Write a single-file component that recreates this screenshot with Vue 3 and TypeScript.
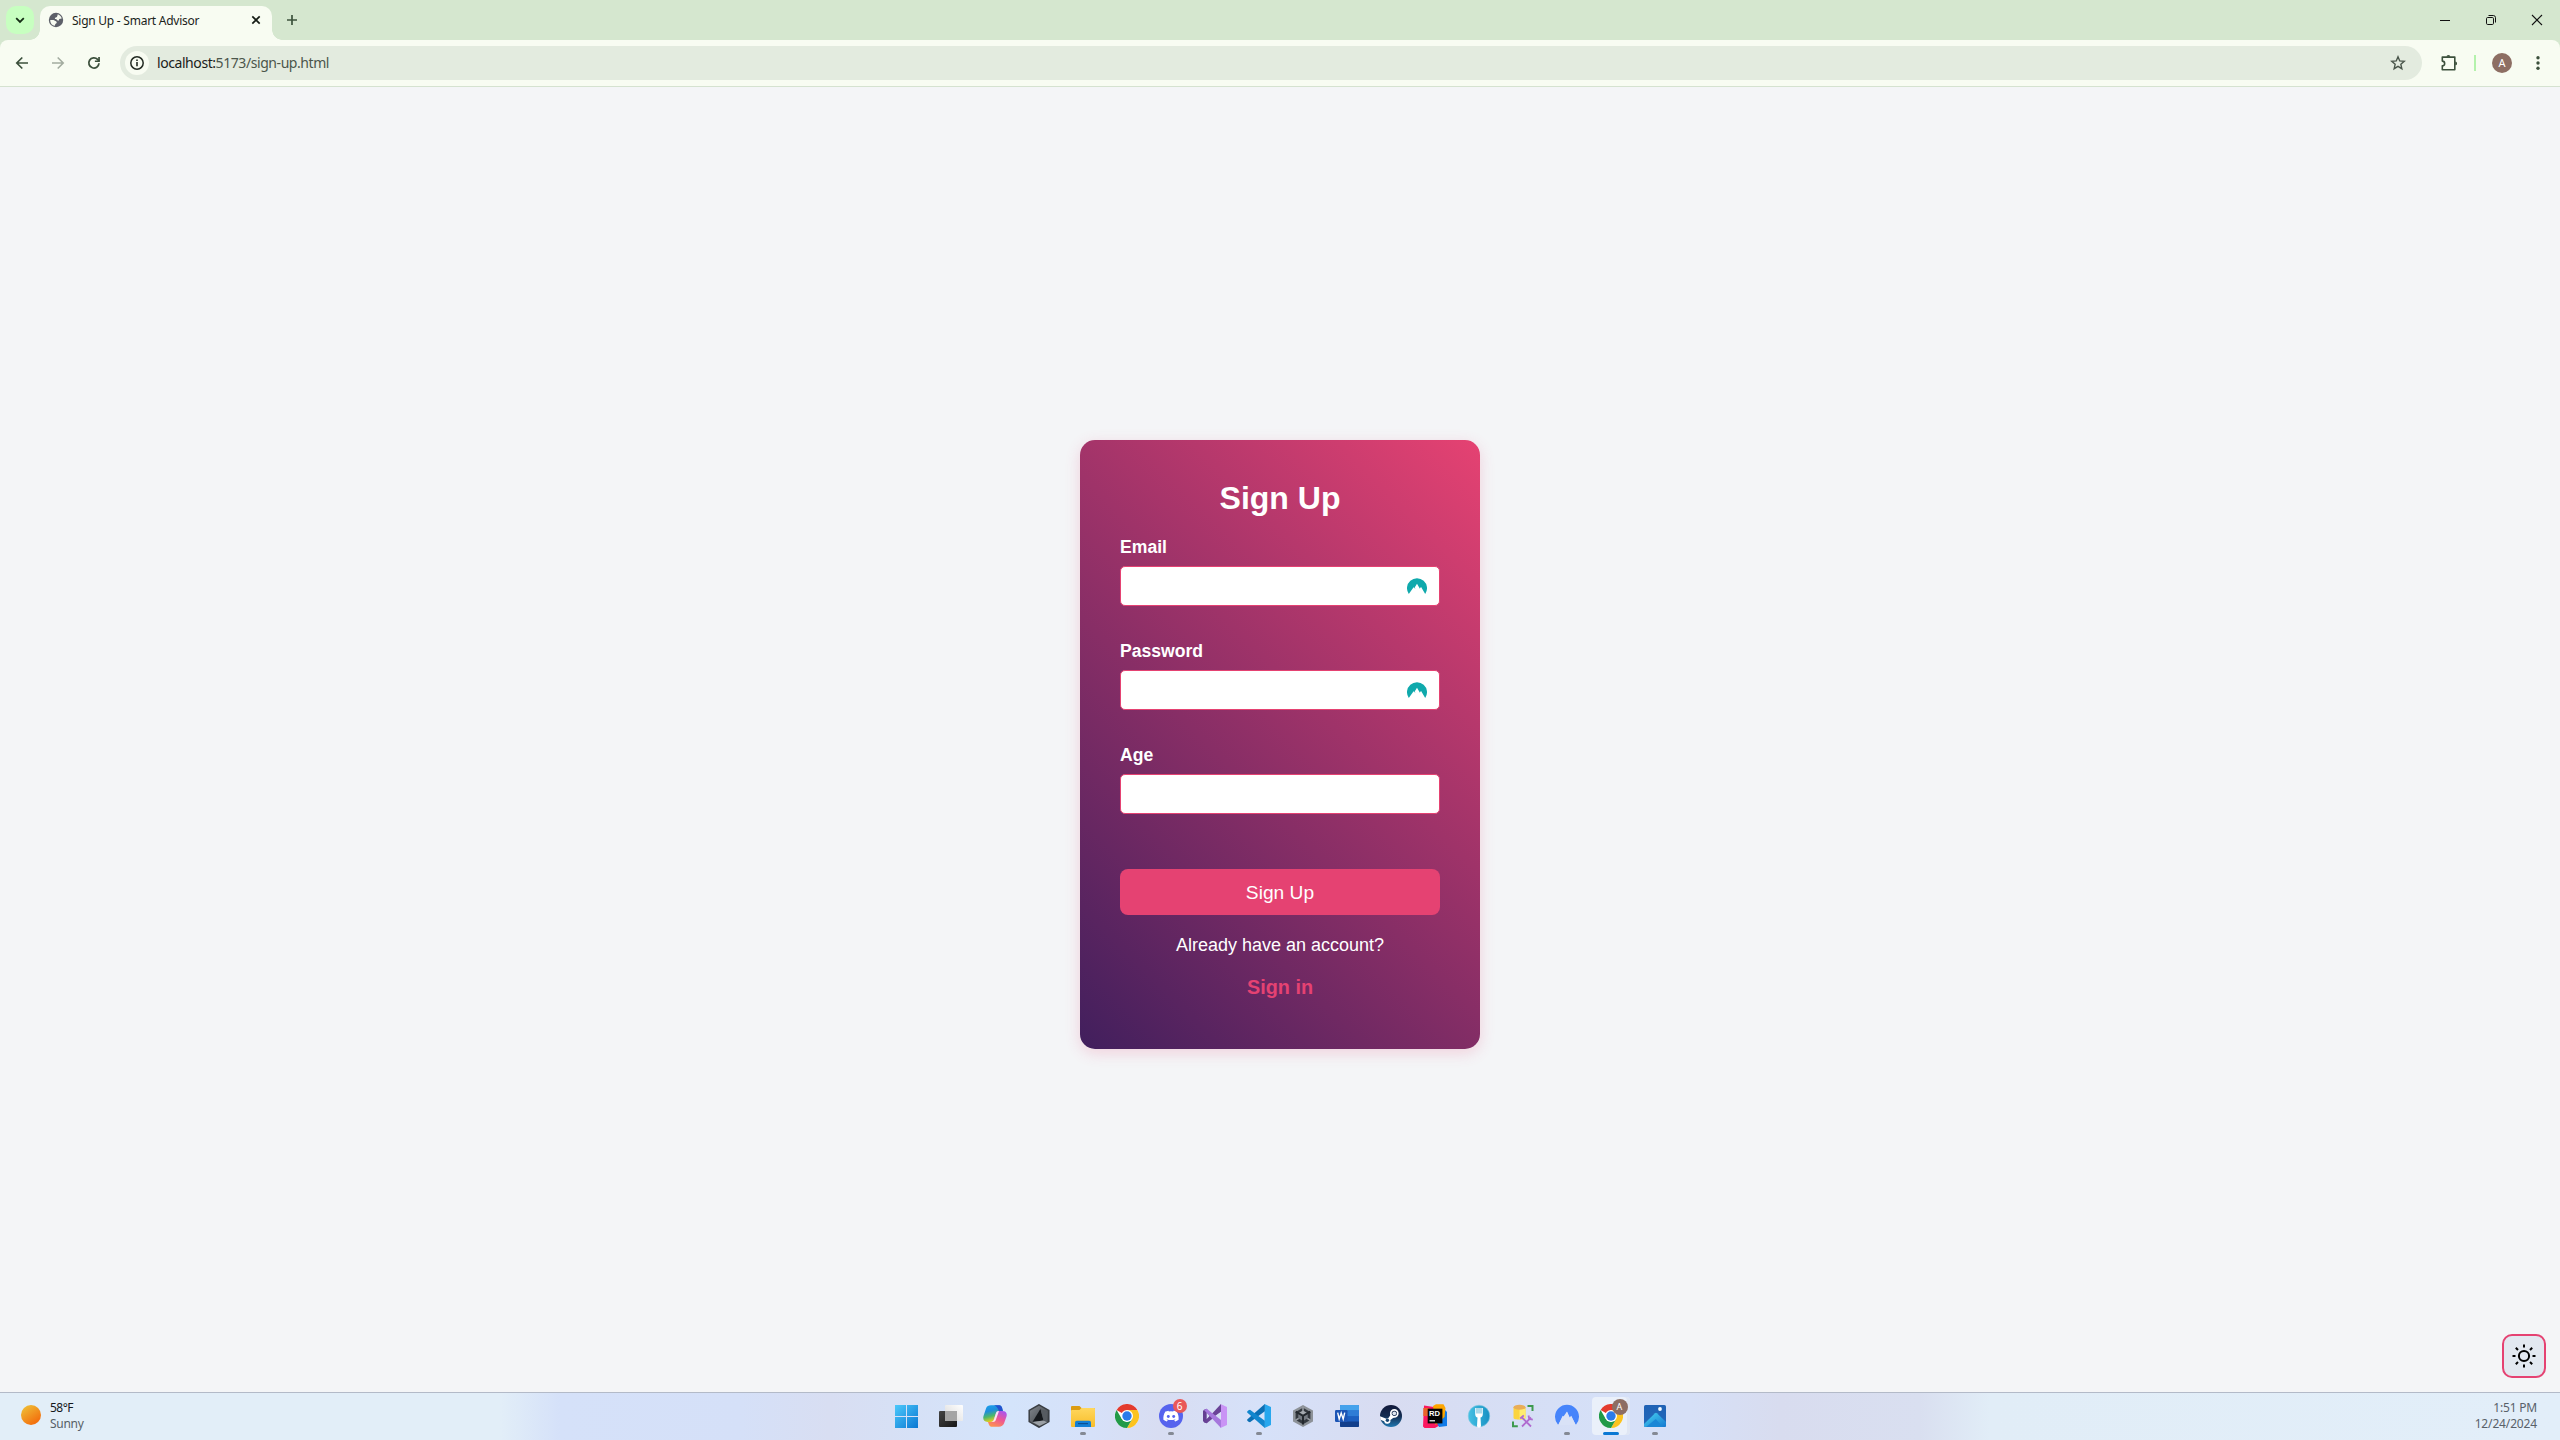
<script setup lang="ts">
interface Field {
  id: string
  label: string
  type: string
  vault: boolean
}

interface TaskApp {
  name: string
  art: string
  state?: 'running' | 'active'
  badge?: { text: string; kind: 'alert' | 'profile' }
}

const fields: Field[] = [
  { id: 'email', label: 'Email', type: 'email', vault: true },
  { id: 'password', label: 'Password', type: 'password', vault: true },
  { id: 'age', label: 'Age', type: 'text', vault: false },
]

const chromeArt = `
  <circle cx="12" cy="12" r="12" fill="#fff"/>
  <path d="M12 12L1.6 6A12 12 0 0 1 22.4 6z" fill="#e33b2e"/>
  <path d="M12 6h10.4A12 12 0 0 1 12 24l5.2-9z" fill="#fcc31e"/>
  <path d="M1.6 6A12 12 0 0 0 12 24l5.2-9-5.2 3-5.2-3z" fill="#229a48"/>
  <circle cx="12" cy="12" r="6" fill="#fff"/>
  <circle cx="12" cy="12" r="4.7" fill="#2a7bea"/>`

const apps: TaskApp[] = [
  {
    name: 'start',
    art: `<defs><linearGradient id="win" x1="0" y1="0" x2="1" y2="1" gradientUnits="objectBoundingBox"><stop offset="0" stop-color="#4cc9fb"/><stop offset="1" stop-color="#0a77d3"/></linearGradient></defs>
      <path d="M0 1h11v11H0zM12 1h11v11H12zM0 13h11v11H0zM12 13h11v11H12z" fill="url(#win)"/>`,
  },
  {
    name: 'task-view',
    art: `<defs><linearGradient id="tvd" x1="0" y1="0" x2="1" y2="1"><stop offset="0" stop-color="#444"/><stop offset="1" stop-color="#171717"/></linearGradient>
      <linearGradient id="tvl" x1="0" y1="1" x2="1" y2="0"><stop offset="0" stop-color="#d8d8d8"/><stop offset="1" stop-color="#fff"/></linearGradient></defs>
      <rect x="0" y="7" width="18" height="16" rx="1" fill="url(#tvd)"/>
      <rect x="6" y="1" width="18" height="16" rx="1" fill="url(#tvl)"/>
      <path d="M6 7h12v10H6.800a.8.8 0 0 1-.8-.8z" fill="#a4a4a4"/>`,
  },
  {
    name: 'copilot',
    art: `<defs><linearGradient id="cpa" x1="0" y1="0" x2=".3" y2="1"><stop offset="0" stop-color="#1aa2ee"/><stop offset=".4" stop-color="#1f8edb"/><stop offset=".7" stop-color="#4db86a"/><stop offset="1" stop-color="#e8cf1d"/></linearGradient>
      <linearGradient id="cpb" x1=".8" y1="0" x2=".3" y2="1"><stop offset="0" stop-color="#a855f0"/><stop offset=".5" stop-color="#ee5793"/><stop offset="1" stop-color="#fd9150"/></linearGradient></defs>
      <path d="M8 1.300h8.300c1.500 0 2.300 1 2.700 2.300L19.900 7H16c-1.700 0-2.500.8-3 2.300l-2.100 6.300C10.400 17 9.500 18 8 18H4.500C1 18-.4 15.200.5 12L3 4.600C3.700 2.400 5.500 1.300 8 1.300z" fill="url(#cpa)"/>
      <path d="M11 1.300h5.300c1.500 0 2.300 1 2.700 2.300L19.900 7H16c-1.200-3-2.600-5-5-5.700z" fill="#2352cf"/>
      <path d="M16 22.700H8.400c-1.300 0-2.100-.9-2.500-2.100L5 18h3c1.500 0 2.400-1 2.900-2.400L13 9.300C13.500 7.800 14.300 7 16 7h3.500c3.500 0 4.900 2.300 4 5.500L21 19.600c-.8 2.100-2.500 3.100-5 3.100z" fill="url(#cpb)"/>
      <path d="M12.900 9.500C13.500 7.700 14.400 7 16 7l-3.300 9.300C12 18 10.800 18 8 18c1.500 0 2.400-1 2.900-2.400z" fill="#fff" opacity=".85"/>`,
  },
  {
    name: 'hex-cursor',
    art: `<defs><linearGradient id="hxg" x1="0" y1="0" x2="1" y2="1"><stop offset="0" stop-color="#84898f"/><stop offset="1" stop-color="#33373c"/></linearGradient></defs>
      <path d="M12 .8L21.800 6.400v11.200L12 23.200l-9.800-5.600V6.400z" fill="url(#hxg)" stroke="#393d42" stroke-width="1.500"/>
      <path d="M13.500 4.800L16.500 16.500 5.500 18z" fill="#15181c"/><path d="M16.500 16.500l4 1.500-8 4L5.500 18z" fill="#9ba0a5"/>
      <path d="M13.500 4.800L16.500 16.500l4 1.500-.2-10z" fill="#565b61"/>`,
  },
  {
    name: 'files',
    state: 'running',
    art: `<defs><linearGradient id="fld" x1="0" y1="0" x2="0" y2="1"><stop offset="0" stop-color="#ffd75e"/><stop offset="1" stop-color="#f8bd2a"/></linearGradient></defs>
      <path d="M0 3a1 1 0 0 1 1-1h7.500l2 2H23a1 1 0 0 1 1 1v6H0z" fill="#dc9c12"/>
      <path d="M0 7a1 1 0 0 1 1-1h7.500l2-2H23a1 1 0 0 1 1 1v17a1 1 0 0 1-1 1H1a1 1 0 0 1-1-1z" fill="url(#fld)"/>
      <path d="M4 23v-4.500A1.800 1.800 0 0 1 5.800 16.700h12.400a1.800 1.800 0 0 1 1.800 1.800V23z" fill="#137fd5"/>
      <path d="M7 19.600h10" stroke="#0d4f91" stroke-width="1.200"/>`,
  },
  { name: 'chrome', art: chromeArt },
  {
    name: 'discord',
    state: 'running',
    badge: { text: '6', kind: 'alert' },
    art: `<circle cx="12" cy="12" r="12" fill="#5663ee"/>
      <path d="M17.600 7.600a11 11 0 0 0-3-.95l-.5.9a10.500 10.500 0 0 0-4.200 0l-.5-.9c-1 .2-2 .5-3 .95C4.600 10.300 4.200 13 4.400 15.700a11 11 0 0 0 3.500 1.700l.9-1.300-1.300-.6.3-.3c2.700 1.200 5.700 1.200 8.400 0l.3.3-1.300.6.9 1.300a11 11 0 0 0 3.500-1.700c.3-3.100-.4-5.800-2-8.100z" fill="#fff"/>
      <circle cx="9.300" cy="12.500" r="1.450" fill="#5663ee"/><circle cx="14.700" cy="12.500" r="1.450" fill="#5663ee"/>`,
  },
  {
    name: 'visual-studio',
    art: `<path d="M1 18.200l2.700 1L9 12 3.700 4.800 1 5.800 0 7v10z" fill="#643f92"/>
      <path d="M3.700 8.600v6.600L7 12z" fill="#d7dff5"/>
      <path d="M17.500 0L24 3v18l-6.500 3z" fill="#c993f5"/>
      <path d="M1 18.200l2.700 1L18 8V0z" fill="#6a4397"/>
      <path d="M12 12l6-4.300v8.600z" fill="#d7dff5"/>
      <path d="M3.700 4.800L18 16v8L1 5.900z" fill="#a678dd"/>`,
  },
  {
    name: 'vscode',
    state: 'running',
    art: `<path d="M17.500 0L24 3v18l-6.500 3z" fill="#27a7ee"/>
      <path d="M17.800 0v7.200L3 18.200 1.500 17.800.2 16.600V15.600z" fill="#0c6fb4"/>
      <path d="M17.800 24v-7.200L3 5.800l-1.500.4L.2 7.400v1z" fill="#1286ce"/>`,
  },
  {
    name: 'unity',
    art: `<path d="M12 1l10 5.600v11L12 23 2 17.600v-11z" fill="#8d9298"/>
      <path d="M12 3.700l7.400 4.200v8.200L12 20.300l-7.400-4.200V7.900z" fill="#33383e"/>
      <path d="M12 12l4.700-2.700v5L12 17zM12 12L7.300 9.300v5L12 17z" fill="#757b82"/>
      <path d="M12 6.500l4.700 2.800L12 12 7.300 9.300z" fill="#a5aaaf"/>
      <path d="M12 11.500V20.500M12.300 11.700l7-4M11.700 11.700l-7-4" stroke="#24292e" stroke-width="2"/>
      <path d="M12 3v4M4.500 16.300l3.200-1.900M19.500 16.300l-3.200-1.900" stroke="#979ca2" stroke-width="1.600"/>`,
  },
  {
    name: 'word',
    art: `<rect x="5" y="1" width="19" height="22" rx="1.300" fill="#1c5fc0"/>
      <path d="M5 2.300A1.300 1.300 0 0 1 6.300 1h16.400A1.300 1.300 0 0 1 24 2.300v4.300H5z" fill="#45a2ec"/>
      <path d="M5 6.600h19v5.500H5z" fill="#2e7cd6"/><path d="M5 17.500h19v4.200a1.300 1.300 0 0 1-1.300 1.300H6.300A1.300 1.300 0 0 1 5 21.700z" fill="#123f8c"/>
      <rect x="0" y="6" width="12.500" height="12" rx="1.200" fill="#1c55b5"/>
      <path d="M2.700 8.700l1.500 6.500 2-6.200 2 6.200 1.500-6.500" fill="none" stroke="#fff" stroke-width="1.400"/>`,
  },
  {
    name: 'steam',
    art: `<defs><linearGradient id="stm" x1="0" y1="0" x2="0" y2="1"><stop offset="0" stop-color="#10183a"/><stop offset=".5" stop-color="#142c50"/><stop offset="1" stop-color="#2077b0"/></linearGradient></defs>
      <circle cx="12" cy="12" r="11" fill="url(#stm)"/>
      <circle cx="15.300" cy="9.300" r="3.500" fill="none" stroke="#fff" stroke-width="1.700"/><circle cx="15.300" cy="9.300" r="1.900" fill="#dfe6ef"/>
      <path d="M1 12.200l6.300 2.500a3 3 0 0 1 2-.5l2.800-4.300 3 3.300-3.700 2.800a3.200 3.200 0 0 1-6.300 1.200l-3.700-1.500z" fill="#fff"/>
      <circle cx="8.400" cy="16.300" r="1.700" fill="#1a4670"/>`,
  },
  {
    name: 'rider',
    art: `<path d="M1 1.500L11 3l11 9-3 8-7 4H1.500L0 22.500z" fill="#fb1860"/>
      <path d="M21 5l3 3v14l-8 1-2-4z" fill="#117be8"/>
      <path d="M10 2l3-1.700h7.500L22.500 4l-1 9-9 8z" fill="#fda500"/>
      <path d="M.3 4h6v8h-6z" fill="#e8632a"/>
      <rect x="4.700" y="4.700" width="14.700" height="14.700" fill="#050505"/>
      <text x="6" y="11.700" font-family="Liberation Sans, sans-serif" font-size="7.600" font-weight="700" fill="#fff">RD</text>
      <path d="M6.500 16.800h5.500" stroke="#fff" stroke-width="1.200"/>`,
  },
  {
    name: 'fork',
    art: `<defs><linearGradient id="frk" x1="0" y1="0" x2="1" y2="0"><stop offset="0" stop-color="#45c1e4"/><stop offset="1" stop-color="#1790c3"/></linearGradient></defs>
      <circle cx="12" cy="12" r="10.800" fill="url(#frk)" stroke="#8ccbe2" stroke-width=".6"/>
      <path d="M8.200 4v6.200c0 2 1 2.900 2.300 3.400L10 21.800a2 2 0 0 0 4 0l-.5-8.200c1.300-.5 2.300-1.400 2.300-3.400V4" fill="#fff"/>
      <path d="M10 3.500v6M12 3.500v6M14 3.500v6" stroke="#41a9ce" stroke-width=".9"/>`,
  },
  {
    name: 'db-tools',
    art: `<path d="M2.500 3.500h12v10.500c0 2-12 2-12 0z" fill="#fbd43f"/><path d="M8.500 5h6v9c0 1-3 1.500-6 1.500z" fill="#ffec70"/>
      <ellipse cx="8.500" cy="3.300" rx="6" ry="2.500" fill="#e9ad57"/>
      <path d="M16.500 2h5v5M2 17.500v4.700h4.800" fill="none" stroke="#3d9a4d" stroke-width="2"/>
      <path d="M10.500 13l9.500 9.500M20 13.500l-9 9" stroke="#b06bd0" stroke-width="1.800"/>
      <path d="M9.200 14.500l3.600-3.200M17.500 11.500l.8 3.500 3.500.6" fill="none" stroke="#b06bd0" stroke-width="1.800"/>`,
  },
  {
    name: 'nordvpn',
    state: 'running',
    art: `<path d="M3.200 21A12 12 0 1 1 20.800 21L16 12.300l-1.500 1.800.3 1L12 8l-2.300 4.600.7 1.300L8 12.300z" fill="#4684fb"/>
      <path d="M12 7.500l-3.500 5-.8-.7-4.500 9.200h17.600l-4.500-9.200-1.500 1.600z" fill="#d9e2f7"/>`,
  },
  {
    name: 'chrome-profile',
    state: 'active',
    badge: { text: 'A', kind: 'profile' },
    art: chromeArt,
  },
  {
    name: 'photos',
    state: 'running',
    art: `<defs><linearGradient id="pha" x1="0" y1="0" x2="0" y2="1"><stop offset="0" stop-color="#1f62b5"/><stop offset="1" stop-color="#2369ba"/></linearGradient>
      <linearGradient id="phb" x1="0" y1="0" x2="1" y2="1"><stop offset="0" stop-color="#48d3f2"/><stop offset="1" stop-color="#1478d0"/></linearGradient></defs>
      <rect x="1" y="1" width="22" height="22" rx="1.600" fill="url(#pha)"/>
      <path d="M1 20L12 9.300a1.500 1.500 0 0 1 2 0l9 8.700v3.400a1.600 1.600 0 0 1-1.600 1.600H2.600A1.600 1.600 0 0 1 1 21.400z" fill="url(#phb)"/>
      <path d="M3 23l9.800-8L20 23z" fill="#1a87d6"/>
      <circle cx="17" cy="5" r="1.900" fill="#f2fbff"/>`,
  },
]
</script>

<template>
  <div class="screen">
    <header class="browser">
      <div class="tabstrip">
        <button class="tab-search" aria-label="Search tabs">
          <svg width="10" height="10" viewBox="0 0 10 10"><path d="M1.200 3.200L5 6.900l3.800-3.700" fill="none" stroke="#142c14" stroke-width="1.800" /></svg>
        </button>
        <div class="tab">
          <svg class="globe" width="16" height="16" viewBox="0 0 16 16">
            <circle cx="8" cy="8" r="7.200" fill="#5d6069" />
            <path d="M9.600 2.300c1.900.5 3.500 1.900 4.100 4-.8.8-1.500.3-2.300.8-.7.500-.2 1.500-1.300 1.600-1.200 0-1.200-1.600-2.500-1.600-.8 0-1-.8-.4-1.300.7-.5 1.900-.2 1.900-1.200 0-.8.900-1.300.5-2.300z" fill="#f7fbf1" />
            <path d="M2.200 7.900h3.300c1 0 1.300.9 2 1.200.8.400 1.300.8 1.200 1.700-.1.800-1.300.9-1.600 1.600-.2.600.1.900-.1 1.400A5.900 5.900 0 0 1 2.200 7.900z" fill="#f7fbf1" />
          </svg>
          <span class="tab-title">Sign Up - Smart Advisor</span>
          <svg class="tab-close" width="10" height="10" viewBox="0 0 10 10"><path d="M1.300 1.300l7.400 7.400M8.700 1.300L1.300 8.700" stroke="#151c15" stroke-width="1.700" /></svg>
        </div>
        <svg class="new-tab" width="12" height="12" viewBox="0 0 12 12"><path d="M6 1v10M1 6h10" stroke="#3c533c" stroke-width="1.700" /></svg>
        <div class="window-controls">
          <svg width="12" height="12" viewBox="0 0 12 12"><path d="M1 6.500h10" stroke="#111" stroke-width="1" /></svg>
          <svg width="12" height="12" viewBox="0 0 12 12"><g fill="none" stroke="#111"><rect x="1.500" y="3.500" width="7" height="7" rx="1.200" /><path d="M3.500 1.500h4.800a2.200 2.200 0 0 1 2.200 2.200v4.800" /></g></svg>
          <svg width="12" height="12" viewBox="0 0 12 12"><path d="M1 1l10 10M11 1L1 11" stroke="#111" stroke-width="1.100" /></svg>
        </div>
      </div>

      <div class="toolbar">
        <svg class="nav" width="16" height="16" viewBox="0 0 16 16"><path d="M14 8H3M8.300 2.500L2.800 8l5.500 5.500" fill="none" stroke="#3c503c" stroke-width="1.700" /></svg>
        <svg class="nav" width="16" height="16" viewBox="0 0 16 16"><path d="M2 8h11M7.700 2.500L13.200 8l-5.500 5.500" fill="none" stroke="#a3aca0" stroke-width="1.600" /></svg>
        <svg class="nav" width="16" height="16" viewBox="0 0 16 16"><path d="M13 8.300A5.100 5.100 0 1 1 11.600 4.400L13.200 6" fill="none" stroke="#3c503c" stroke-width="1.800" /><path d="M13.900 2v5H8.900V5.500h3.300V2z" fill="#3c503c" /></svg>
        <div class="omnibox">
          <span class="site-info">
            <svg width="16" height="16" viewBox="0 0 16 16"><circle cx="8" cy="8" r="6.200" fill="none" stroke="#222a22" stroke-width="1.500" /><path d="M8 7v4.300M8 4.400v1.600" stroke="#222a22" stroke-width="1.600" /></svg>
          </span>
          <span class="url"><b>localhost:</b>5173/sign-up.html</span>
          <svg class="star" width="16" height="16" viewBox="0 0 16 16"><path d="M8 1.800l1.750 4.150 4.500.4-3.400 2.950 1 4.400L8 11.350 4.150 13.700l1-4.400-3.400-2.950 4.500-.4z" fill="none" stroke="#49554a" stroke-width="1.400" /></svg>
        </div>
        <svg class="puzzle" width="18" height="18" viewBox="0 0 18 18"><path d="M2.300 3.100h12.500v12.700H2.300v-4a2.300 2.300 0 0 0 0-4.700z" fill="none" stroke="#3c503c" stroke-width="1.600" stroke-linejoin="round" /><path d="M6.500 2.800a1.900 1.900 0 0 1 3.800 0zM15.200 7.500a1.900 1.900 0 0 1 0 3.800z" fill="#3c503c" /></svg>
        <span class="divider"></span>
        <span class="avatar">A</span>
        <svg class="menu" width="4" height="16" viewBox="0 0 4 16"><g fill="#3c503c"><circle cx="2" cy="2.700" r="1.700" /><circle cx="2" cy="8" r="1.700" /><circle cx="2" cy="13.300" r="1.700" /></g></svg>
      </div>
    </header>

    <main class="page">
      <form class="card" @submit.prevent>
        <h1>Sign Up</h1>
        <div v-for="f in fields" :key="f.id" class="field">
          <label :for="f.id">{{ f.label }}</label>
          <div class="control">
            <input :id="f.id" :type="f.type" />
            <svg v-if="f.vault" class="vault" width="20" height="16" viewBox="0 0 20 16">
              <path d="M1.800 16A10 10 0 1 1 18.200 16L14.100 9l-1.200 1.300.3.900L10 5.700 7.700 9.500l.8 1.500-1.900-1.700z" fill="#0fa9ac" />
            </svg>
          </div>
        </div>
        <button class="submit" type="submit">Sign Up</button>
        <p class="question">Already have an account?</p>
        <a class="signin">Sign in</a>
      </form>

      <button class="theme" aria-label="Toggle theme">
        <svg width="24" height="24" viewBox="0 0 24 24">
          <circle cx="12" cy="12" r="5.100" fill="none" stroke="#000" stroke-width="2" />
          <path d="M12 .5v3M12 20.500v3M.5 12h3M20.500 12h3M3.800 3.800l2.200 2.200M18 18l2.200 2.200M3.800 20.200L6 18M18 6l2.200-2.200" stroke="#000" stroke-width="2" />
        </svg>
      </button>
    </main>

    <footer class="taskbar">
      <div class="weather">
        <span class="sun"></span>
        <div class="lines">
          <span class="temp">58°F</span>
          <span class="sky">Sunny</span>
        </div>
      </div>
      <div class="apps">
        <div v-for="app in apps" :key="app.name" class="app" :class="app.state">
          <svg width="24" height="24" viewBox="0 0 24 24" v-html="app.art"></svg>
          <span v-if="app.badge" class="badge" :class="app.badge.kind">{{ app.badge.text }}</span>
          <span v-if="app.state" class="mark"></span>
        </div>
      </div>
      <div class="clock">
        <span class="time">1:51 PM</span>
        <span class="date">12/24/2024</span>
      </div>
    </footer>
  </div>
</template>

<style>
body {
  margin: 0;
  overflow: hidden;
}
</style>

<style scoped>
.screen {
  display: flex;
  flex-direction: column;
  width: 2560px;
  height: 1440px;
  font-family: "Liberation Sans", Arial, sans-serif;
  background: #f4f5f7;
}
svg {
  display: block;
  flex: none;
}
button {
  padding: 0;
  border: 0;
}

/* browser frame */
.browser {
  background: #d5e7cf;
  font-family: "Noto Sans", "Open Sans", sans-serif;
}
.tabstrip {
  display: flex;
  align-items: center;
  height: 40px;
}
.tab-search {
  display: flex;
  align-items: center;
  justify-content: center;
  width: 28px;
  height: 28px;
  margin: 0 6px;
  border-radius: 10px;
  background: #c7ffc0;
}
.tab {
  position: relative;
  display: flex;
  align-items: center;
  box-sizing: border-box;
  width: 232px;
  height: 34px;
  margin-top: 6px;
  padding: 0 11px 6px 8px;
  border-radius: 10px 10px 0 0;
  background: #f8fcf2;
}
.tab::before,
.tab::after {
  content: "";
  position: absolute;
  bottom: 0;
  width: 10px;
  height: 10px;
}
.tab::before {
  right: 100%;
  background: radial-gradient(circle at 0 0, transparent 9.5px, #f8fcf2 10px);
}
.tab::after {
  left: 100%;
  background: radial-gradient(circle at 100% 0, transparent 9.5px, #f8fcf2 10px);
}
.tab-title {
  flex: 1;
  margin-left: 8px;
  padding-top: 1px;
  font-size: 12px;
  line-height: 16px;
  letter-spacing: -0.25px;
  white-space: nowrap;
  color: #1a231a;
}
.new-tab {
  margin-left: 14px;
}
.window-controls {
  display: flex;
  gap: 34px;
  margin-left: auto;
  padding-right: 17px;
}
.toolbar {
  display: flex;
  align-items: center;
  box-sizing: border-box;
  height: 47px;
  padding: 0 20px 0 14px;
  border-bottom: 1px solid #d5e2d0;
  border-radius: 8px 8px 0 0;
  background: #f8fcf2;
}
.nav {
  margin-right: 20px;
}
.omnibox {
  display: flex;
  flex: 1;
  align-items: center;
  height: 34px;
  margin-left: -2px;
  padding: 0 16px 0 5px;
  border-radius: 17px;
  background: #e3ebdf;
}
.site-info {
  display: flex;
  align-items: center;
  justify-content: center;
  width: 24px;
  height: 24px;
  border-radius: 50%;
  background: #f8fcf2;
}
.url {
  flex: 1;
  margin-left: 8px;
  font-size: 14px;
  line-height: 20px;
  letter-spacing: -0.43px;
  color: #4b564b;
}
.url b {
  font-weight: 400;
  color: #1a211a;
}
.puzzle {
  margin-left: 18px;
}
.divider {
  width: 2px;
  height: 16px;
  margin-left: 16px;
  background: #b4f2ac;
}
.avatar {
  width: 20px;
  height: 20px;
  margin-left: 16px;
  border-radius: 50%;
  background: #8d6e63;
  color: #fff;
  font-size: 11px;
  line-height: 20px;
  text-align: center;
}
.menu {
  margin-left: 24px;
}

/* page */
.page {
  position: relative;
  display: flex;
  flex: 1;
  align-items: center;
  justify-content: center;
}
.card {
  display: flex;
  flex-direction: column;
  box-sizing: border-box;
  width: 400px;
  height: 609px;
  margin-top: 10px;
  padding: 40px;
  border-radius: 15px;
  background: linear-gradient(45deg, #411f5d, #e54272);
  box-shadow: 0 4px 15px rgba(229, 66, 114, 0.2);
  color: #fff;
}
h1 {
  margin: 0 0 14px;
  font-size: 32px;
  line-height: 37px;
  text-align: center;
}
.field {
  height: 104px;
}
.field label {
  display: block;
  height: 21px;
  margin-bottom: 14px;
  font-size: 17.6px;
  font-weight: 700;
  line-height: 33px;
}
.control {
  position: relative;
}
.control input {
  display: block;
  box-sizing: border-box;
  width: 320px;
  height: 40px;
  border: 1px solid #e54272;
  border-radius: 5px;
  outline: 0;
  background: #fff;
}
.vault {
  position: absolute;
  top: 12px;
  right: 13px;
}
.submit {
  height: 46px;
  margin-top: 26px;
  border-radius: 8px;
  background: #e54272;
  color: #fff;
  font: 19.2px/45px "Liberation Sans", Arial, sans-serif;
}
.question {
  margin: 18px 0 0;
  font-size: 18px;
  line-height: 24px;
  text-align: center;
}
.signin {
  margin-top: 18px;
  color: #e54272;
  font-size: 19.8px;
  font-weight: 700;
  line-height: 24px;
  text-align: center;
}
.theme {
  position: absolute;
  right: 14px;
  bottom: 14px;
  display: flex;
  align-items: center;
  justify-content: center;
  box-sizing: border-box;
  width: 44px;
  height: 44px;
  border: 2px solid #e54272;
  border-radius: 10px;
  background: #e2e8f0;
}

/* taskbar */
.taskbar {
  display: flex;
  align-items: center;
  justify-content: space-between;
  box-sizing: border-box;
  height: 48px;
  padding-bottom: 1px;
  border-top: 1px solid #b3bac8;
  background: linear-gradient(90deg, #e2eef8 0, #e2eef8 500px, #d5e1f9 560px, #d5e0f8 740px, #d8def2 830px, #d4e4fb 1010px, #d6e1f9 1090px, #d8ddf2 1160px, #d6e1f9 1260px, #d8dcf1 1390px, #d5e0f8 1610px, #d6e0f7 1690px, #d8dcef 1780px, #d9dff0 1920px, #e1edf7 1990px, #e2eef9 2560px);
  font-family: "Noto Sans", "Open Sans", sans-serif;
  font-size: 12px;
  line-height: 16px;
}
.weather,
.clock {
  display: flex;
  box-sizing: border-box;
  width: 300px;
}
.weather {
  align-items: center;
  padding-left: 21px;
}
.sun {
  width: 20px;
  height: 20px;
  margin: -2px 9px 0 0;
  border-radius: 50%;
  background: linear-gradient(145deg, #efbd35 10%, #f3720f 80%);
}
.lines {
  display: flex;
  flex-direction: column;
}
.temp {
  letter-spacing: -0.5px;
  color: #14181c;
}
.sky {
  letter-spacing: -0.3px;
  color: #565e66;
}
.clock {
  flex-direction: column;
  align-items: flex-end;
  padding-right: 23px;
  color: #596169;
}
.time {
  letter-spacing: -0.2px;
}
.date {
  letter-spacing: -0.15px;
}
.apps {
  display: flex;
  gap: 6px;
  margin-left: 1px;
}
.app {
  position: relative;
  display: flex;
  align-items: center;
  justify-content: center;
  width: 38px;
  height: 38px;
  border-radius: 4px;
}
.app.active {
  background: #eaf0fa;
  box-shadow: inset -3px 0 0 #dfe6f4;
}
.mark {
  position: absolute;
  bottom: 0;
  left: 16px;
  width: 6px;
  height: 3px;
  border-radius: 2px;
  background: #848994;
}
.active .mark {
  left: 11px;
  width: 16px;
  background: #0b78d4;
}
.badge {
  position: absolute;
  top: 2px;
  right: 3px;
  width: 14px;
  height: 14px;
  border-radius: 50%;
  color: #fff;
  font-size: 10px;
  line-height: 14px;
  text-align: center;
}
.badge.alert {
  background: #e95858;
}
.badge.profile {
  right: 2px;
  width: 16px;
  height: 16px;
  background: #8d6e63;
  font-size: 9px;
  line-height: 16px;
}
</style>
